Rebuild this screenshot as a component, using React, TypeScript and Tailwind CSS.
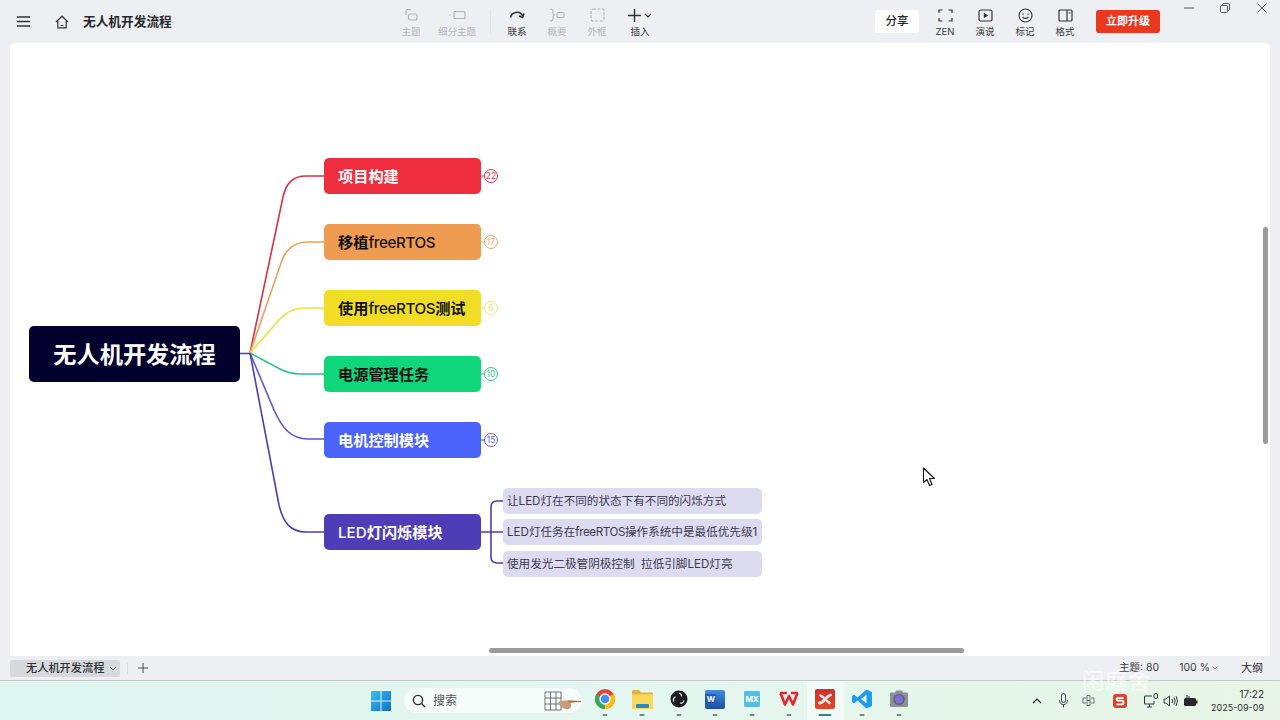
import React from "react";

const cjk = "font-['Inter','Noto_Sans_CJK_SC',sans-serif]";

function ToolItem({ label, w = "w-9", muted = false, children }: { label: string; w?: string; muted?: boolean; children: React.ReactNode }) {
  return (
    <div className={`${w} shrink-0 flex flex-col items-center`}>
      <div className="h-[18px] flex items-center justify-center">{children}</div>
      <span className={`text-[9.5px] leading-[13px] mt-[1px] whitespace-nowrap ${muted ? "text-[#b4b6bb]" : "text-[#3a3c42]"}`}>{label}</span>
    </div>
  );
}

function TaskIcon({ active = false, dot = true, children }: { active?: boolean; dot?: boolean; children: React.ReactNode }) {
  return (
    <div className={`relative w-[36.7px] h-[39px] shrink-0 flex items-center justify-center ${active ? "bg-white/50" : ""}`}>
      <div className="mb-[3px] flex">{children}</div>
      {dot && <span className={`absolute bottom-[4px] left-1/2 -translate-x-1/2 h-[2px] rounded ${active ? "w-[13px] bg-[#2b8a83]" : "w-[5px] bg-[#7b8584]"}`} />}
    </div>
  );
}

function Free() {
  return <span className="font-medium tracking-[-0.4px]">freeRTOS</span>;
}

const branches = [
  { k: "a", t: <>项目构建</>, top: 158, bg: "bg-[#ee2e3e]", fg: "text-white", n: "22", nc: "#d9344a", d: "M250 353 L283 197 C286 184 292 176 306 176 H324", s: "#dc3044" },
  { k: "b", t: <>移植<Free /></>, top: 224, bg: "bg-[#ef9c52]", fg: "text-[#111]", n: "17", nc: "#efa46a", d: "M250 353 L281 263 C285 251 293 242 308 242 H324", s: "#ee9f58" },
  { k: "c", t: <>使用<Free />测试</>, top: 290, bg: "bg-[#f1dd26]", fg: "text-[#111]", n: "6", nc: "#eee27a", d: "M250 353 L279 320 C285 313 292 308 305 308 H324", s: "#f0dd3a" },
  { k: "d", t: <>电源管理任务</>, top: 356, bg: "bg-[#0fd67a]", fg: "text-[#111]", n: "10", nc: "#2fc98a", d: "M250 353 L280 369 C286 372 291 374 300 374 H324", s: "#28c486" },
  { k: "e", t: <>电机控制模块</>, top: 422, bg: "bg-[#4b63fb]", fg: "text-white", n: "15", nc: "#5a5fd8", d: "M250 353 L274 410 C282 428 291 439 308 439 H324", s: "#5559dc" },
  { k: "f", t: <><span className="font-medium">LED</span>灯闪烁模块</>, top: 514, bg: "bg-[#4f3db7]", fg: "text-white", n: "", nc: "", d: "M250 353 L279 505 C283 522 290 532 306 532 H324", s: "#4f3db7" },
];

const subs = [
  { k: "s1", t: <>让LED灯在不同的状态下有不同的闪烁方式</>, cls: "top-[488px] h-[26px]" },
  { k: "s2", t: <>LED灯任务在<span className="tracking-[-0.4px]">freeRTOS</span>操作系统中是最低优先级1</>, cls: "top-[519px] h-[26px]" },
  { k: "s3", t: <>使用发光二极管阴极控制  拉低引脚LED灯亮</>, cls: "top-[551px] h-[26px]" },
];

export default function App() {
  return (
    <div className={`w-[1280px] h-[720px] overflow-hidden flex flex-col bg-[#eeeff2] ${cjk}`}>
      {/* top bar */}
      <header className="h-[43px] shrink-0 flex items-start">
        <div className="w-[393px] shrink-0 h-full flex items-center">
          <svg className="ml-[17px]" width="13" height="11" viewBox="0 0 13 11" fill="none" stroke="#33353a" strokeWidth="1.4"><path d="M0 1h13M0 5.5h13M0 10h13" /></svg>
          <svg className="ml-[25px]" width="14" height="14" viewBox="0 0 14 14" fill="none" stroke="#33353a" strokeWidth="1.2"><path d="M1 7 7 1.2 13 7M2.8 5.8V12.8H11.2V5.8M5.5 10.5h3" /></svg>
          <span className="ml-[14px] text-[12.7px] font-bold text-[#26282c] whitespace-nowrap">无人机开发流程</span>
        </div>
        <div className="flex gap-0 pt-[6px]">
          <ToolItem label="主题" muted>
            <svg width="14" height="14" viewBox="0 0 14 14" fill="none" stroke="#b3b5ba" strokeWidth="1.2"><path d="M7 1.5H3.5Q2 1.5 2 3V7" /><rect x="4.5" y="6" width="8.5" height="6" rx="2" /></svg>
          </ToolItem>
          <ToolItem label="细分主题" w="w-[56px]" muted>
            <svg width="18" height="10" viewBox="0 0 18 10" fill="none" stroke="#b3b5ba" strokeWidth="1.2"><path d="M1 5h1.500" /><rect x="6" y="1.500" width="11" height="7" rx="1" /></svg>
          </ToolItem>
          <div className="w-px h-[24px] mx-[5px] mt-[4px] bg-[#e3e4e7]" />
          <div className="w-[3px]" />
          <ToolItem label="联系">
            <svg width="16" height="13" viewBox="0 0 16 13" fill="none" stroke="#2f3136" strokeWidth="1.6"><path d="M1.500 8.500C2.500 3 11 1 13.500 7" /><path d="M15 4.500 13.600 8.500 10 7" /></svg>
          </ToolItem>
          <div className="w-[4px]" />
          <ToolItem label="概要" muted>
            <svg width="16" height="14" viewBox="0 0 16 14" fill="none" stroke="#b3b5ba" strokeWidth="1.1"><path d="M1 1Q4 1 4 3V5.500Q4 7 6 7Q4 7 4 8.500V11Q4 13 1 13" /><rect x="8" y="4.500" width="7" height="5" rx="1" /></svg>
          </ToolItem>
          <div className="w-[4px]" />
          <ToolItem label="外框" muted>
            <svg width="15" height="14" viewBox="0 0 15 14" fill="none" stroke="#b3b5ba" strokeWidth="1.2" strokeDasharray="3 1.4"><rect x="1" y="1" width="13" height="12" rx="2" /></svg>
          </ToolItem>
          <div className="w-[7px]" />
          <ToolItem label="插入">
            <div className="flex items-center gap-[3px]">
              <svg width="13" height="13" viewBox="0 0 13 13" fill="none" stroke="#2f3136" strokeWidth="1.4"><path d="M6.500 0v13M0 6.500h13" /></svg>
              <svg width="8" height="5" viewBox="0 0 8 5" fill="none" stroke="#2f3136" strokeWidth="1.2"><path d="M1 1l3 3 3-3" /></svg>
            </div>
          </ToolItem>
        </div>
        <div className="ml-[217px] mt-[10px] w-[44px] h-[23px] bg-white rounded-[3px] flex items-center justify-center text-[11.5px] font-medium text-[#26282c]">分享</div>
        <div className="ml-[8px] flex gap-[4px] pt-[6px]">
          <ToolItem label="ZEN">
            <svg width="15" height="13" viewBox="0 0 15 13" fill="none" stroke="#33353a" strokeWidth="1.2"><path d="M1 4V1H4.500M10.500 1H14V4M14 9V12H10.500M4.500 12H1V9" /></svg>
          </ToolItem>
          <ToolItem label="演说">
            <svg width="15" height="13" viewBox="0 0 15 13"><rect x="1" y="1" width="13" height="11" rx="1.500" fill="none" stroke="#33353a" strokeWidth="1.2" /><path d="M5.800 3.800V9.200L10.200 6.500Z" fill="#33353a" /></svg>
          </ToolItem>
          <ToolItem label="标记">
            <svg width="15" height="15" viewBox="0 0 15 15" fill="none" stroke="#33353a" strokeWidth="1.1"><circle cx="7.500" cy="7.500" r="6.500" /><path d="M4.500 9Q7.500 11.800 10.500 9" /><path d="M5 5.500v1.200M10 5.500v1.200" strokeWidth="1.4" /></svg>
          </ToolItem>
          <ToolItem label="格式">
            <svg width="15" height="13" viewBox="0 0 15 13" fill="none" stroke="#33353a" strokeWidth="1.2"><rect x="1" y="1" width="13" height="11" rx="1" /><path d="M9 1v11M10.500 4h2" /></svg>
          </ToolItem>
        </div>
        <div className="ml-[13px] mt-[10px] w-[64px] h-[23px] bg-[#e8391f] rounded-[3px] flex items-center justify-center text-[11px] font-bold text-white">立即升级</div>
        <div className="ml-[24px] pt-[3px] flex items-center text-[#4a4c50]">
          <svg width="10" height="10" viewBox="0 0 10 10" stroke="#55575b" strokeWidth="1"><path d="M0 5h10" /></svg>
          <svg className="ml-[26px]" width="10" height="10" viewBox="0 0 10 10" fill="none" stroke="#55575b" strokeWidth="1"><rect x="0.500" y="2.500" width="7" height="7" rx="1" /><path d="M2.500 2.500V1.500Q2.500 .5 3.500 .5H8Q9.500 .5 9.500 2V6.500Q9.500 7.500 8 7.500" /></svg>
          <svg className="ml-[27px]" width="10" height="10" viewBox="0 0 10 10" stroke="#55575b" strokeWidth="1"><path d="M.5 .5l9 9M9.500 .5l-9 9" /></svg>
        </div>
      </header>

      {/* canvas */}
      <main className="relative h-[613px] shrink-0 mx-[10px] bg-white rounded-t-[5px] overflow-hidden">
        <div className="absolute -left-[10px] -top-[43px] w-[1280px] h-[720px]">
          <svg className="absolute left-0 top-0" width="1280" height="720" fill="none">
            <path d="M240 353.500H250" stroke="#5147b5" strokeWidth="1.6" />
            {branches.map((b) => <path key={b.k} d={b.d} stroke={b.s} strokeWidth="1.6" />)}
            {branches.filter((b) => b.n).map((b) => (
              <g key={b.n}>
                <path d={`M481 ${b.top + 18}H484`} stroke={b.nc} strokeWidth="1.2" />
                <circle cx="491" cy={b.top + 18} r="6.500" stroke={b.nc} strokeWidth="1" fill="white" />
              </g>
            ))}
            <path d="M481 532H503M503 501H497Q491 501 491 507V557Q491 563 497 563H503" stroke="#4f3db7" strokeWidth="1.6" />
          </svg>

          <div className="absolute left-[29px] top-[326px] w-[211px] h-[56px] pt-[3px] rounded-[5px] bg-[#03002e] flex items-center justify-center text-[23.200px] font-bold text-white whitespace-nowrap">无人机开发流程</div>

          {branches.map((b) => (
            <div key={b.k} className={`absolute left-[324px] w-[157px] h-[36px] pt-[2px] rounded-[5px] pl-[14px] flex items-center text-[15.200px] font-bold whitespace-nowrap ${b.bg} ${b.fg}`} style={{ top: b.top }}><span>{b.t}</span></div>
          ))}
          {branches.filter((b) => b.n).map((b) => (
            <span key={b.n} className="absolute left-[484px] w-[14px] h-[14px] flex items-center justify-center text-[8.500px] leading-none" style={{ top: b.top + 11, color: b.nc }}>{b.n}</span>
          ))}
          {subs.map((s) => (
            <div key={s.k} className={`absolute left-[503px] w-[259px] rounded-[5px] bg-[#dddbf0] pl-[4px] pt-[1px] flex items-center text-[11.600px] text-[#3c3a50] whitespace-pre ${s.cls}`}><span>{s.t}</span></div>
          ))}

          {/* scrollbars */}
          <div className="absolute left-[1263px] top-[227px] w-[5px] h-[217px] rounded-full bg-[#9b9b9b]" />
          <div className="absolute left-[489px] top-[648px] w-[475px] h-[5px] rounded-full bg-[#9b9b9b]" />

          {/* mouse cursor */}
          <svg className="absolute left-[922px] top-[467px]" width="14" height="20" viewBox="0 0 14 20"><path d="M1.500 1V15.500L5 12.500 7.500 18.500 10 17.500 7.500 11.500H12.500Z" fill="white" stroke="#111" strokeWidth="1.1" strokeLinejoin="round" /></svg>
        </div>
      </main>

      {/* tab bar */}
      <div className="relative h-[25px] shrink-0 flex items-center border-b border-[#c2c8c6]">
        <div className="ml-[10px] w-[110px] h-[17px] rounded-[2px] bg-[#d7d9dc] flex items-center pl-[16px]">
          <span className="text-[11.200px] font-medium text-[#2c2e32] whitespace-nowrap">无人机开发流程</span>
          <svg className="ml-[5px]" width="8" height="5" viewBox="0 0 8 5" fill="none" stroke="#6f7176" strokeWidth="1"><path d="M1 1l3 3 3-3" /></svg>
        </div>
        <div className="ml-[7px] w-px h-[11px] bg-[#dfe0e3]" />
        <svg className="ml-[10px]" width="10" height="10" viewBox="0 0 10 10" stroke="#4a4c50" strokeWidth="1"><path d="M5 0v10M0 5h10" /></svg>
        <span className="ml-auto text-[10.500px] text-[#3c3e42] whitespace-nowrap">主题: 80</span>
        <span className="ml-[20px] text-[10.500px] text-[#3c3e42] whitespace-nowrap">100 %</span>
        <svg className="ml-[2px] mr-[23px]" width="6" height="4" viewBox="0 0 6 4" fill="none" stroke="#8a8c90" strokeWidth=".9"><path d="M.5 .5l2.500 2.500 2.500-2.500" /></svg>
        <span className="mr-[17px] text-[11px] text-[#2c2e32] whitespace-nowrap">大纲</span>
      </div>

      {/* taskbar */}
      <footer className="relative h-[39px] shrink-0 flex items-center bg-gradient-to-r from-[#e0f6f0] via-[#e3f6ef] to-[#e8f5e6]">
        <svg className="ml-[371px]" width="20" height="20" viewBox="0 0 20 20"><defs><linearGradient id="w" x1="0" y1="0" x2="1" y2="1"><stop offset="0" stopColor="#39c0f0" /><stop offset="1" stopColor="#0f6fc6" /></linearGradient></defs><path d="M0 0h9.500v9.500H0zM10.500 0H20v9.500h-9.500zM0 10.500h9.500V20H0zM10.500 10.500H20V20h-9.500z" fill="url(#w)" /></svg>
        <div className="ml-[13px] w-[178px] h-[25px] rounded-full bg-[#f5fbf9] flex items-center pl-[8px]">
          <svg className="shrink-0" width="14" height="14" viewBox="0 0 14 14" fill="none" stroke="#2a2c30" strokeWidth="1.4"><circle cx="6" cy="6" r="4.600" /><path d="M9.500 9.500 13 13" /></svg>
          <span className="ml-[7px] text-[12px] text-[#555] whitespace-nowrap">搜索</span>
          <svg className="ml-[87px] shrink-0" width="40" height="20" viewBox="0 0 40 20" fill="none"><path d="M1 1h16v18H1zM1 7h16M1 13h16M6.500 1v18M12 1v18" stroke="#555" strokeWidth=".8" /><path d="M14 11Q22 8 36 10.500 24 12 27 13 28 19 22 18 16 17 14 11Z" fill="#c99a7c" /><path d="M24 10.500H37" stroke="#b0694a" strokeWidth="1.2" /></svg>
        </div>
        <div className="ml-[5px] flex">
          <TaskIcon>
            <svg width="20" height="20" viewBox="0 0 20 20"><circle cx="10" cy="10" r="10" fill="#e8453c" /><path d="M10 10 18.660 5A10 10 0 0 1 10 20Z" fill="#fbbc05" /><path d="M10 10V20A10 10 0 0 1 1.340 5Z" fill="#34a853" /><circle cx="10" cy="10" r="5" fill="#4a8bf0" stroke="white" strokeWidth="1.3" /></svg>
          </TaskIcon>
          <TaskIcon>
            <svg width="21" height="19" viewBox="0 0 21 19"><path d="M0 1.500Q0 0 1.500 0H7L9 2.500H20Q21 2.500 21 4V18Q21 19 20 19H1Q0 19 0 18Z" fill="#e2b23a" /><path d="M0 4.500H21V18Q21 19 20 19H1Q0 19 0 18Z" fill="#fbd95a" /><rect x="4" y="14" width="13" height="4" rx="1" fill="#2787c9" /></svg>
          </TaskIcon>
          <TaskIcon>
            <svg width="18" height="18" viewBox="0 0 18 18" fill="none"><circle cx="9" cy="9" r="8.500" fill="#1d1d20" /><path d="M9 3.200A2.800 2.800 0 0 1 11.500 6.500M13.800 10.500A2.800 2.800 0 0 1 10 13M4 11.500A2.800 2.800 0 0 1 5.500 7" stroke="#e4e4e4" strokeWidth="1.300" /></svg>
          </TaskIcon>
          <TaskIcon>
            <div className="relative w-[20px] h-[19px] rounded-[2px] bg-gradient-to-b from-[#3f8fe0] to-[#1a4fa0]">
              <span className="absolute left-0 top-[4px] w-[11px] h-[11px] rounded-[1px] bg-[#1f5bb5] text-white text-[8px] font-bold leading-[11px] text-center">W</span>
            </div>
          </TaskIcon>
          <TaskIcon>
            <div className="w-[16px] h-[16px] bg-[#54bfe0] rounded-[1px] text-white text-[8px] font-bold leading-[16px] text-center">MX</div>
          </TaskIcon>
          <TaskIcon>
            <svg width="20" height="16" viewBox="0 0 20 16" fill="none" stroke="#e8242e" strokeWidth="2.600" strokeLinejoin="round"><path d="M1.500 2 6 13.500 10 5 14 13.500 18.500 2" /><path d="M1 2H8M12 2H19" /></svg>
          </TaskIcon>
          <TaskIcon active>
            <div className="relative w-[20px] h-[20px] rounded-[2px] bg-gradient-to-b from-[#cf2f2f] to-[#e2482a]">
              <svg className="absolute inset-0" width="20" height="20" viewBox="0 0 20 20" fill="none" stroke="#ffe9e4" strokeLinecap="round"><path d="M4.500 14C8 14 9 11 10.500 9.500S13 7 15.500 6" strokeWidth="2.800" /><path d="M5.500 6.500 8.500 8.500M11.500 11.500 14.500 14" strokeWidth="2.400" /></svg>
            </div>
          </TaskIcon>
          <TaskIcon>
            <svg width="20" height="20" viewBox="0 0 20 20"><path d="M14.500 0.500 20 3V17L14.500 19.500 5.500 11.500 2 14.500 0 13V7L2 5.500 5.500 8.500ZM14.500 5.500 9 10 14.500 14.500Z" fill="#1f9cf0" /></svg>
          </TaskIcon>
          <TaskIcon>
            <svg width="20" height="18" viewBox="0 0 20 18"><path d="M1 3.500Q1 2.500 2 2.500H6L7 .5H13L14 2.500H18Q19 2.500 19 3.500V16Q19 17 18 17H2Q1 17 1 16Z" fill="#8b8f96" /><circle cx="10" cy="9.500" r="5" fill="#7a6fd6" stroke="#5f6166" strokeWidth="1.200" /></svg>
          </TaskIcon>
        </div>
        <svg className="ml-[115px]" width="10" height="6" viewBox="0 0 10 6" fill="none" stroke="#222" strokeWidth="1.200"><path d="M1 5l4-4 4 4" /></svg>
        <svg className="ml-[17px]" width="9" height="15" viewBox="0 0 9 15" fill="none" stroke="#44484a" strokeWidth="1"><rect x="2.500" y=".5" width="4" height="9" rx="2" /><path d="M.5 7Q.5 11.500 4.500 11.500T8.500 7M4.500 11.500V14.500" /></svg>
        <svg className="ml-[14px]" width="13" height="11" viewBox="0 0 13 11" fill="none" stroke="#6e7476" strokeWidth="1"><path d="M4 3H1V8H4M9 3H12V8H9M5 .5H8V10.500H5ZM5 5.500H8" /></svg>
        <svg className="ml-[18px]" width="14" height="14" viewBox="0 0 14 14"><rect width="14" height="14" rx="3" fill="#e5402b" /><path d="M10.500 4H5Q3.500 4 3.500 5.300T5 6.700H9Q10.500 6.700 10.500 8.500T9 10.300H3.500" fill="none" stroke="white" strokeWidth="1.800" /></svg>
        <svg className="ml-[17px]" width="15" height="15" viewBox="0 0 15 15" fill="none" stroke="#33363a" strokeWidth="1"><path d="M8 3H.5V11H10V8M3 14H8M5.500 11V14" /><rect x="10" y=".5" width="3.500" height="5" rx="1.500" /></svg>
        <svg className="ml-[4px]" width="15" height="12" viewBox="0 0 15 12" fill="none" stroke="#33363a" strokeWidth="1"><path d="M1 4V8H3L6.500 11V1L3 4ZM9 4Q10.500 6 9 8M11 2.500Q13.500 6 11 9.500M13 1Q16 6 13 11" /></svg>
        <svg className="ml-[6px]" width="14" height="12" viewBox="0 0 14 12"><rect x="0" y="3" width="12" height="8" rx="1.500" fill="#26282b" /><rect x="12" y="5.500" width="1.500" height="3" fill="#26282b" /><path d="M3 0V3M5 1V3" stroke="#26282b" strokeWidth="1" /></svg>
        <div className="ml-auto mr-[16px] flex flex-col items-end leading-[13px] text-[#2d3033]">
          <span className="text-[10px]">17:22</span>
          <span className="text-[9px]">2025-09-09</span>
        </div>
        <span className="absolute left-[1082px] -top-[15px] text-[22px] leading-[30px] font-medium tracking-[1px] text-white/60 whitespace-nowrap">闲庭舍</span>
      </footer>
    </div>
  );
}
